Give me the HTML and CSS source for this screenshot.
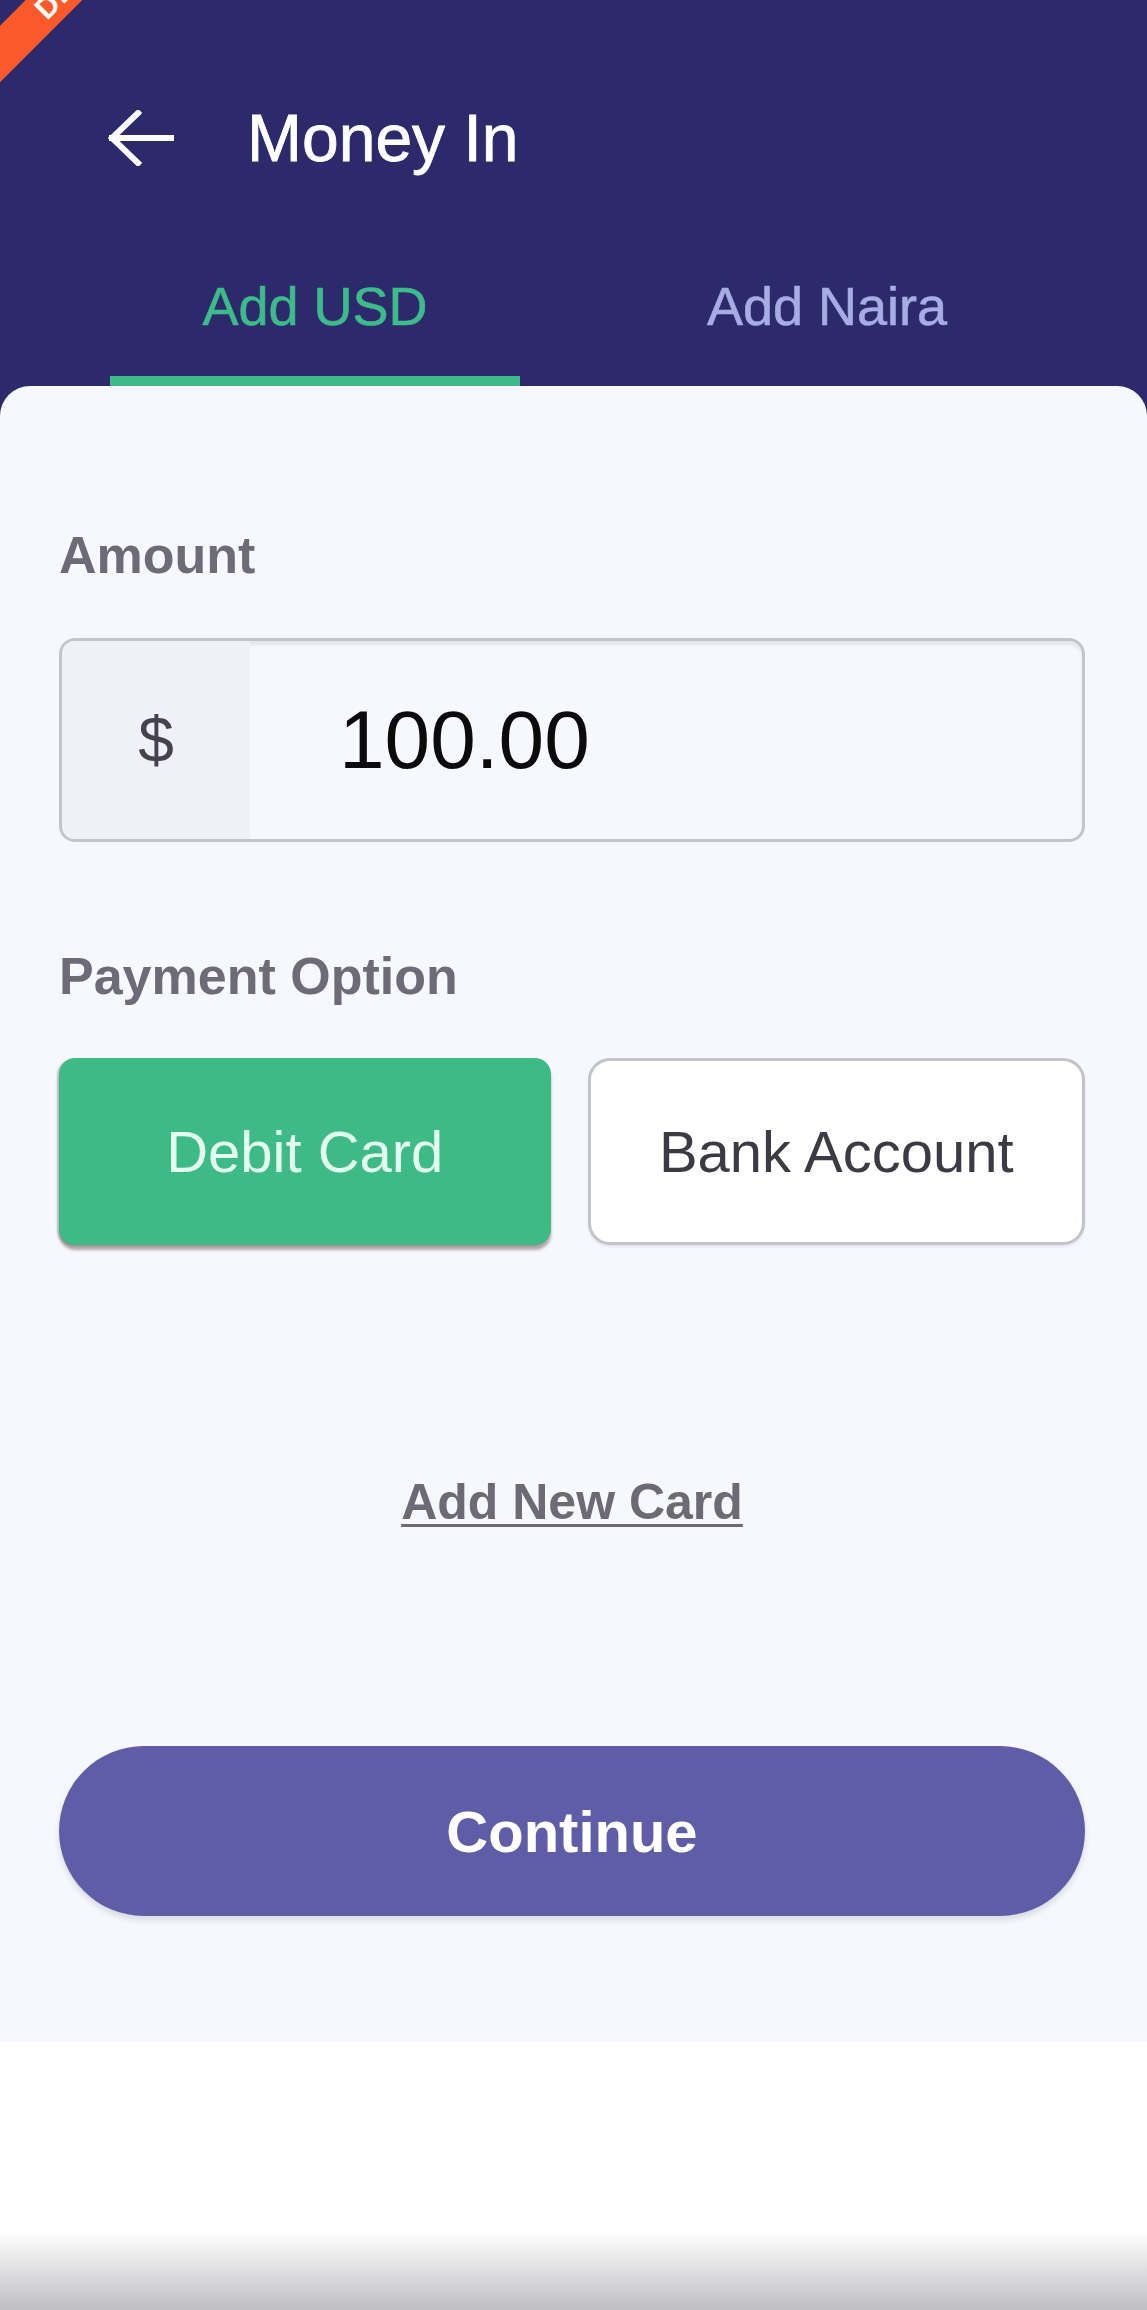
FILE: index.html
```html
<!DOCTYPE html>
<html lang="en">
<head>
<meta charset="utf-8">
<title>Money In</title>
<link rel="stylesheet" href="styles.css">
</head>
<body>
<div class="screen">
  <div class="top">
    <header class="appbar">
      <div class="debug-banner"><span>DEBUG</span></div>
      <div class="toolbar">
        <svg class="back" viewBox="0 0 66 56" width="66" height="56" aria-hidden="true">
          <path d="M4 28 H64 M30 3 L4 28 L30 53" fill="none" stroke="#ffffff" stroke-width="6" stroke-linecap="square" stroke-linejoin="miter"/>
        </svg>
        <h1 class="title">Money In</h1>
      </div>
      <nav class="tabs">
        <div class="tab active">Add USD</div>
        <div class="tab">Add Naira</div>
      </nav>
    </header>
    <main class="card">
      <div class="field-label">Amount</div>
      <div class="amount-input">
        <span class="prefix">$</span>
        <span class="value">100.00</span>
      </div>
      <div class="field-label label-payment">Payment Option</div>
      <div class="options">
        <button class="option selected">Debit Card</button>
        <button class="option">Bank Account</button>
      </div>
      <div class="add-card"><a class="add-card-link">Add New Card</a></div>
      <button class="continue">Continue</button>
    </main>
  </div>
  <div class="bottom-area"></div>
</div>
</body>
</html>
```
FILE: styles.css
```css
html, body {
  margin: 0;
  padding: 0;
  background: #ffffff;
}

body {
  font-family: "Liberation Sans", Arial, sans-serif;
}

.screen {
  width: 1147px;
  height: 2310px;
  display: flex;
  flex-direction: column;
  overflow: hidden;
}

.top {
  background: #2c2a6b;
}

.appbar {
  position: relative;
  height: 386px;
  overflow: hidden;
}

.debug-banner {
  position: absolute;
  left: -123px;
  top: 7px;
  width: 300px;
  height: 40px;
  background: #fd5a2b;
  transform: rotate(-45deg);
  display: flex;
  align-items: center;
  justify-content: center;
  padding-left: 150px;
  box-sizing: border-box;
}

.debug-banner span {
  color: #ffffff;
  font-weight: 700;
  font-size: 30px;
  letter-spacing: 1px;
}

.toolbar {
  margin-top: 55px;
  height: 166px;
  display: flex;
  align-items: center;
  padding-left: 108px;
}

.back {
  display: block;
  flex: none;
}

.title {
  margin: 0 0 0 73px;
  font-size: 66px;
  line-height: 66px;
  font-weight: 400;
  color: #ffffff;
  -webkit-text-stroke: 0.8px #ffffff;
}

.tabs {
  display: flex;
  margin: 0 64px 0 59px;
  height: 165px;
}

.tab {
  position: relative;
  flex: 1;
  display: flex;
  align-items: center;
  justify-content: center;
  padding-top: 4px;
  font-size: 54px;
  line-height: 56px;
  color: #a7ace4;
  -webkit-text-stroke: 0.6px #a7ace4;
}

.tab.active {
  color: #3dbb8b;
  -webkit-text-stroke: 0.6px #3dbb8b;
}

.tab.active::after {
  content: "";
  position: absolute;
  left: 51px;
  right: 51px;
  bottom: 0;
  height: 10px;
  background: #3dba88;
}

.card {
  display: block;
  background: #f7f8fd;
  border-radius: 30px 30px 0 0;
  padding: 139px 62px 126px 59px;
}

.field-label {
  font-size: 52px;
  line-height: 60px;
  font-weight: 700;
  color: #6c6b77;
}

.amount-input {
  margin-top: 53px;
  height: 204px;
  box-sizing: border-box;
  border: 3px solid #c4c4cc;
  border-radius: 16px;
  background: #f7f8fd;
  display: flex;
  align-items: stretch;
  overflow: hidden;
  box-shadow: inset 0 4px 3px rgba(0, 0, 0, 0.07);
}

.prefix {
  width: 188px;
  flex: none;
  background: #f0f0f9;
  display: flex;
  align-items: center;
  justify-content: center;
  font-size: 64px;
  color: #44434d;
}

.value {
  display: flex;
  align-items: center;
  padding-left: 89px;
  font-size: 82px;
  color: #0b0b0d;
}

.label-payment {
  margin-top: 104px;
}

.options {
  margin-top: 52px;
  display: flex;
  gap: 37px;
}

.option {
  flex: 1;
  height: 187px;
  font-family: "Liberation Sans", Arial, sans-serif;
  font-size: 58px;
  font-weight: 400;
  border-radius: 16px;
  padding: 0;
  cursor: pointer;
}

.option.selected {
  background: #3dba85;
  color: #e2fff0;
  border: none;
  box-shadow: 0 5px 3px rgba(90, 70, 70, 0.45), -2px 1px 2px rgba(90, 90, 90, 0.3);
}

.option:not(.selected) {
  background: #ffffff;
  color: #3b3b43;
  border: 3px solid #c3c3cb;
  border-radius: 22px;
  box-shadow: 0 2px 3px rgba(0, 0, 0, 0.08);
}

.add-card {
  margin-top: 227px;
  text-align: center;
  font-size: 50px;
  line-height: 60px;
  font-weight: 700;
}

.add-card-link {
  color: #6b6a75;
  text-decoration: underline;
  text-decoration-thickness: 3px;
  text-underline-offset: 5px;
}

.continue {
  display: block;
  width: 100%;
  margin-top: 214px;
  height: 170px;
  border: none;
  border-radius: 85px;
  background: #5f5da8;
  color: #ffffff;
  font-family: "Liberation Sans", Arial, sans-serif;
  font-size: 58px;
  font-weight: 700;
  box-shadow: 0 4px 6px rgba(0, 0, 0, 0.12);
}

.bottom-area {
  flex: 1;
  background: linear-gradient(to bottom, #ffffff 0, #ffffff 189px, #f6f6f7 200px, #bfbec2 268px);
}
```
